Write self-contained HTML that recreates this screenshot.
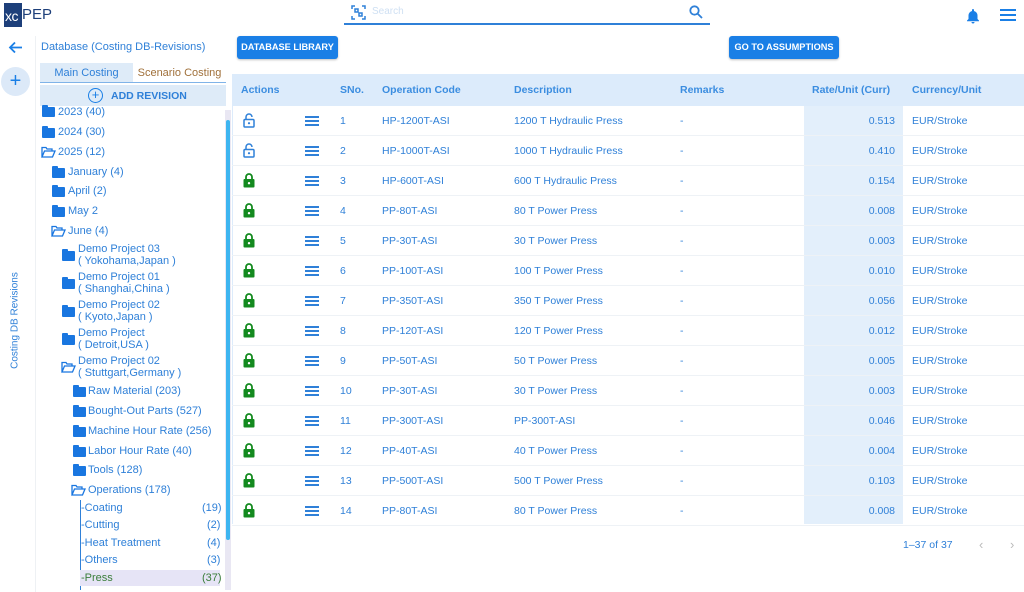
<!DOCTYPE html>
<html><head><meta charset="utf-8"><style>
*{box-sizing:border-box;margin:0;padding:0}
body{width:1024px;height:592px;overflow:hidden;background:#fff;font-family:"Liberation Sans",sans-serif;color:#2f80d8;position:relative;font-size:11px}
.a{position:absolute;white-space:nowrap}
.fold{position:absolute;width:13px;height:10px;background:#1976e0;border-radius:1px}
.fold:before{content:"";position:absolute;left:0;top:-2px;width:6px;height:3px;background:#1976e0;border-radius:1px 1px 0 0}
.t{position:absolute;font-size:11px;color:#2f80d8;white-space:nowrap;line-height:12px}
.row{position:absolute;left:232px;width:792px;height:30px;border-bottom:1px solid #eef2f6;font-size:10.5px}
.row span{position:absolute;top:9px}
.btn{position:absolute;background:#1a7fe6;color:#fff;font-weight:bold;font-size:9.2px;border-radius:3px;text-align:center;line-height:23px;height:23px;box-shadow:0 1px 2px rgba(0,0,0,.25)}
</style></head><body>
<!-- logo -->
<div class="a" style="left:4px;top:3px;width:18px;height:24px;background:#1d3f7a"></div>
<div class="a" style="left:5px;top:8px;font-size:14px;color:#fff;letter-spacing:-0.5px">xc</div>
<div class="a" style="left:22px;top:6px;font-size:15px;color:#1d3f7a">PEP</div>
<!-- search -->
<div class="a" style="left:344px;top:23px;width:366px;height:1.5px;background:#2f80d8"></div>
<svg class="a" style="left:351px;top:5px" width="15" height="15" viewBox="0 0 15 15" fill="none" stroke="#2f80d8" stroke-width="1.5"><path d="M1 4V1h3M11 1h3v3M14 11v3h-3M4 14H1v-3"/><rect x="4" y="4" width="3" height="3"/><rect x="8" y="8" width="3" height="3"/></svg>
<div class="a" style="left:372px;top:6px;font-size:10px;color:#cfe0f3">Search</div>
<svg class="a" style="left:689px;top:5px" width="14" height="14" viewBox="0 0 14 14" fill="none" stroke="#2f80d8" stroke-width="1.8"><circle cx="5.5" cy="5.5" r="4.2"/><path d="M8.7 8.7L13 13"/></svg>
<!-- bell, menu -->
<svg class="a" style="left:966px;top:8px" width="14" height="16" viewBox="0 0 14 16"><path d="M7 1a1 1 0 0 1 1 1v1a4.5 4.5 0 0 1 3.5 4.4V11l1.5 1.5v.8H1v-.8L2.5 11V7.4A4.5 4.5 0 0 1 6 3V2a1 1 0 0 1 1-1zM5.5 14h3a1.5 1.5 0 0 1-3 0z" fill="#1a7fe6"/></svg>
<div class="a" style="left:1000px;top:9px;width:16px;height:2px;background:#1a7fe6;box-shadow:0 5px 0 #1a7fe6,0 10px 0 #1a7fe6"></div>
<!-- left strip -->
<div class="a" style="left:35px;top:36px;width:1px;height:556px;background:#eef1f4"></div>
<svg class="a" style="left:8px;top:41px" width="15" height="13" viewBox="0 0 15 13" fill="none" stroke="#1a7fe6" stroke-width="1.8"><path d="M14 6.5H2M7 1.5L2 6.5l5 5"/></svg>
<div class="a" style="left:1px;top:67px;width:29px;height:29px;border-radius:50%;background:#dce9f8;color:#1a7fe6;font-size:20px;text-align:center;line-height:28px">+</div>
<div class="a" style="left:-35px;top:315px;width:100px;transform:rotate(-90deg);font-size:10px;text-align:center">Costing DB Revisions</div>
<!-- tree header -->
<div class="a" style="left:41px;top:41px;font-size:11px">Database (Costing DB-Revisions)</div>
<div class="a" style="left:40px;top:63px;width:93px;height:20px;background:#deebf8;font-size:11px;text-align:center;line-height:20px">Main Costing</div>
<div class="a" style="left:133px;top:63px;width:93px;height:20px;font-size:11px;text-align:center;line-height:20px;color:#a0703a">Scenario Costing</div>
<div class="a" style="left:40px;top:82px;width:186px;height:1px;background:#7fb3e8"></div>
<div class="a" style="left:40px;top:85px;width:186px;height:21px;background:#deebf8"></div>
<div class="a" style="left:88px;top:88px;width:15px;height:15px;border:1.5px solid #1a7fe6;border-radius:50%;color:#1a7fe6;text-align:center;line-height:11px;font-size:13px">+</div>
<div class="a" style="left:111px;top:90px;font-size:10.5px;font-weight:bold;color:#2f80d8">ADD REVISION</div>
<!-- scrollbar -->
<div class="a" style="left:225px;top:110px;width:6px;height:480px;background:#e9e7f3"></div>
<div class="a" style="left:226px;top:120px;width:4px;height:420px;background:#3db5f0;border-radius:2px"></div>
<!-- tree -->
<div class="fold" style="left:42px;top:107px"></div><div class="t" style="left:58px;top:106px;clip-path:inset(1px 0 0 0)">2023 (40)</div>
<div class="fold" style="left:42px;top:128px"></div><div class="t" style="left:58px;top:126px">2024 (30)</div>
<svg class="a" style="left:41px;top:146px" width="15" height="12" viewBox="0 0 15 12" fill="none" stroke="#1976e0" stroke-width="1.3"><path d="M1 11V1.5h4l1 1.5h5v2M1 11l2.5-6H14l-2.5 6z"/></svg><div class="t" style="left:58px;top:146px">2025 (12)</div>
<div class="fold" style="left:52px;top:168px"></div><div class="t" style="left:68px;top:166px">January (4)</div>
<div class="fold" style="left:52px;top:187px"></div><div class="t" style="left:68px;top:185px">April (2)</div>
<div class="fold" style="left:52px;top:207px"></div><div class="t" style="left:68px;top:205px">May 2</div>
<svg class="a" style="left:51px;top:225px" width="15" height="12" viewBox="0 0 15 12" fill="none" stroke="#1976e0" stroke-width="1.3"><path d="M1 11V1.5h4l1 1.5h5v2M1 11l2.5-6H14l-2.5 6z"/></svg><div class="t" style="left:68px;top:225px">June (4)</div>
<div class="fold" style="left:62px;top:251px"></div><div class="t" style="left:78px;top:243px">Demo Project 03<br>( Yokohama,Japan )</div>
<div class="fold" style="left:62px;top:279px"></div><div class="t" style="left:78px;top:271px">Demo Project 01<br>( Shanghai,China )</div>
<div class="fold" style="left:62px;top:307px"></div><div class="t" style="left:78px;top:299px">Demo Project 02<br>( Kyoto,Japan )</div>
<div class="fold" style="left:62px;top:335px"></div><div class="t" style="left:78px;top:327px">Demo Project<br>( Detroit,USA )</div>
<svg class="a" style="left:61px;top:361px" width="15" height="12" viewBox="0 0 15 12" fill="none" stroke="#1976e0" stroke-width="1.3"><path d="M1 11V1.5h4l1 1.5h5v2M1 11l2.5-6H14l-2.5 6z"/></svg><div class="t" style="left:78px;top:355px">Demo Project 02<br>( Stuttgart,Germany )</div>
<div class="fold" style="left:73px;top:387px"></div><div class="t" style="left:88px;top:385px">Raw Material (203)</div>
<div class="fold" style="left:73px;top:407px"></div><div class="t" style="left:88px;top:405px">Bought-Out Parts (527)</div>
<div class="fold" style="left:73px;top:427px"></div><div class="t" style="left:88px;top:425px">Machine Hour Rate (256)</div>
<div class="fold" style="left:73px;top:447px"></div><div class="t" style="left:88px;top:445px">Labor Hour Rate (40)</div>
<div class="fold" style="left:73px;top:466px"></div><div class="t" style="left:88px;top:464px">Tools (128)</div>
<svg class="a" style="left:71px;top:484px" width="15" height="12" viewBox="0 0 15 12" fill="none" stroke="#1976e0" stroke-width="1.3"><path d="M1 11V1.5h4l1 1.5h5v2M1 11l2.5-6H14l-2.5 6z"/></svg><div class="t" style="left:88px;top:484px">Operations (178)</div>
<div class="a" style="left:80px;top:500px;width:1px;height:90px;background:#2f80d8"></div>
<div class="a" style="left:80px;top:570px;width:140px;height:16px;background:#e6e4f6"></div>
<div class="t" style="left:81px;top:502px">-Coating</div><div class="t" style="left:202px;top:502px">(19)</div>
<div class="t" style="left:81px;top:519px">-Cutting</div><div class="t" style="left:207px;top:519px">(2)</div>
<div class="t" style="left:81px;top:537px">-Heat Treatment</div><div class="t" style="left:207px;top:537px">(4)</div>
<div class="t" style="left:81px;top:554px">-Others</div><div class="t" style="left:207px;top:554px">(3)</div>
<div class="t" style="left:81px;top:572px;color:#3a7d3a">-Press</div><div class="t" style="left:202px;top:572px;color:#3a7d3a">(37)</div>
<!-- buttons -->
<div class="btn" style="left:237px;top:36px;width:101px">DATABASE LIBRARY</div>
<div class="btn" style="left:729px;top:36px;width:110px">GO TO ASSUMPTIONS</div>
<!-- table -->
<div class="a" style="left:232px;top:74px;width:792px;height:32px;background:#dcebfb"></div>
<div class="a" style="left:804px;top:106px;width:99px;height:418px;background:#e3effb"></div>
<div class="a" style="left:232px;top:74px;width:1px;height:450px;background:#dcebfb"></div>
<div class="a" style="top:84px;left:241px;font-weight:bold;font-size:10.5px;color:#3b8de0">Actions</div>
<div class="a" style="top:84px;left:340px;font-weight:bold;font-size:10.5px;color:#3b8de0">SNo.</div>
<div class="a" style="top:84px;left:382px;font-weight:bold;font-size:10.5px;color:#3b8de0">Operation Code</div>
<div class="a" style="top:84px;left:514px;font-weight:bold;font-size:10.5px;color:#3b8de0">Description</div>
<div class="a" style="top:84px;left:680px;font-weight:bold;font-size:10.5px;color:#3b8de0">Remarks</div>
<div class="a" style="top:84px;left:812px;font-weight:bold;font-size:10.5px;color:#3b8de0">Rate/Unit (Curr)</div>
<div class="a" style="top:84px;left:912px;font-weight:bold;font-size:10.5px;color:#3b8de0">Currency/Unit</div>
<div id="rows"></div>
<div class="a" style="left:903px;top:539px;font-size:10.5px">1–37 of 37</div>
<div class="a" style="left:979px;top:537px;font-size:13px;color:#bbb">‹</div>
<div class="a" style="left:1010px;top:537px;font-size:13px;color:#bbb">›</div>
<script>
var d=[["HP-1200T-ASI","1200 T Hydraulic Press","0.513",0],["HP-1000T-ASI","1000 T Hydraulic Press","0.410",0],["HP-600T-ASI","600 T Hydraulic Press","0.154",1],["PP-80T-ASI","80 T Power Press","0.008",1],["PP-30T-ASI","30 T Power Press","0.003",1],["PP-100T-ASI","100 T Power Press","0.010",1],["PP-350T-ASI","350 T Power Press","0.056",1],["PP-120T-ASI","120 T Power Press","0.012",1],["PP-50T-ASI","50 T Power Press","0.005",1],["PP-30T-ASI","30 T Power Press","0.003",1],["PP-300T-ASI","PP-300T-ASI","0.046",1],["PP-40T-ASI","40 T Power Press","0.004",1],["PP-500T-ASI","500 T Power Press","0.103",1],["PP-80T-ASI","80 T Power Press","0.008",1]];
var h="";d.forEach(function(r,i){var y=106+i*30;
var lock=r[3]?'<svg style="position:absolute;left:11px;top:7px" width="12" height="15" viewBox="0 0 12 15"><path d="M3 6V4a3 3 0 0 1 6 0v2" fill="none" stroke="#138a1f" stroke-width="1.8"/><rect x="0.5" y="6" width="11" height="8.5" rx="1" fill="#138a1f"/><circle cx="6" cy="10.2" r="1.2" fill="#fff"/></svg>':'<svg style="position:absolute;left:11px;top:7px" width="12" height="15" viewBox="0 0 12 15"><path d="M3 6V4a3 3 0 0 1 6 0" fill="none" stroke="#2f80d8" stroke-width="1.5"/><rect x="1" y="6.5" width="10" height="7.5" rx="1" fill="none" stroke="#2f80d8" stroke-width="1.5"/><circle cx="6" cy="10.2" r="1.1" fill="#2f80d8"/></svg>';
h+='<div class="row" style="top:'+y+'px">'+lock+'<div style="position:absolute;left:73px;top:10px;width:14px;height:2px;background:#2f80d8;box-shadow:0 4px 0 #2f80d8,0 8px 0 #2f80d8"></div><span style="left:108px">'+(i+1)+'</span><span style="left:150px">'+r[0]+'</span><span style="left:282px">'+r[1]+'</span><span style="left:448px">-</span><span style="left:572px;width:91px;text-align:right">'+r[2]+'</span><span style="left:680px">EUR/Stroke</span></div>';});
document.getElementById("rows").innerHTML=h;
</script>
</body></html>
